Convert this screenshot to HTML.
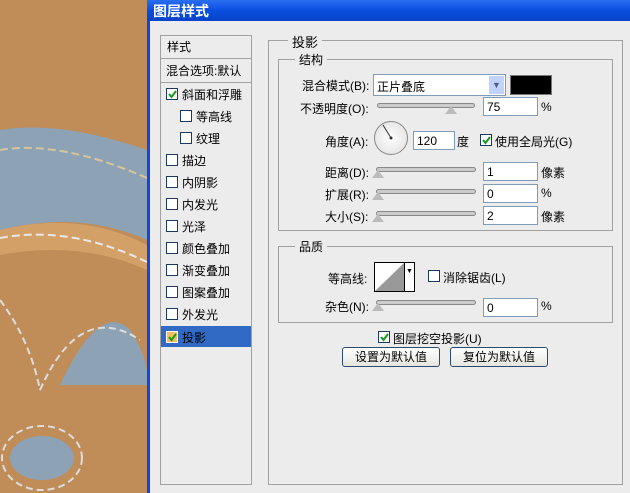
<!DOCTYPE html>
<html><head><meta charset="utf-8"><style>
*{margin:0;padding:0;box-sizing:border-box}
body{width:630px;height:493px;overflow:hidden;position:relative;background:#ececec;font-family:"Liberation Sans","Noto Sans CJK SC","WenQuanYi Zen Hei",sans-serif;font-size:12px;color:#000}
.a{position:absolute}
#img{left:0;top:0;width:147px;height:493px;background:#c08c58;overflow:hidden}
#title{left:147px;top:0;width:483px;height:21px;background:linear-gradient(#2a6ef0,#0a4ee0 50%,#0744c8);color:#fff;font-weight:bold;font-size:14px;padding:1px 0 0 6px}
#lb{left:147px;top:21px;width:3px;height:472px;background:#1046e8}
.t{position:absolute;white-space:nowrap}
.box{position:absolute;border:1px solid #a0a0a0}
.cb{position:absolute;width:12px;height:12px;border:1px solid #1c3b60;background:#fff}
.ck{background:#fff url() no-repeat}
.ck svg{position:absolute;left:1px;top:1px}
.sl{position:absolute;height:5px;border:1px solid #888;border-radius:3px;background:#ccc}
.th{position:absolute;width:0;height:0;border-left:6px solid transparent;border-right:6px solid transparent;border-bottom:8px solid #bbb}
.in{position:absolute;height:19px;border:1px solid #7f9db9;background:#fff;padding:2px 3px;font-size:12px}
.btn{position:absolute;height:20px;border:1px solid #2a4a70;border-radius:3px;background:linear-gradient(#fff,#e6e6e0);text-align:center;line-height:18px}
</style></head><body>
<div id="img" class="a">
<svg width="147" height="493">
<path d="M0 130 Q60 120 147 150 L147 240 Q80 210 0 230 Z" fill="#8ea2b6"/>
<path d="M0 230 Q80 210 147 245 L147 270 Q80 240 0 255Z" fill="#d3a067"/>
<path d="M60 385 Q100 300 130 330 Q150 360 147 385 Z" fill="#8ea2b6"/>
<ellipse cx="42" cy="458" rx="32" ry="22" fill="#8ea2b6"/>
<path d="M0 238 Q70 225 147 262" stroke="#e8e8e8" stroke-width="2" stroke-dasharray="8 4" fill="none"/>
<path d="M0 150 Q60 140 147 178" stroke="#d8c49a" stroke-width="2" stroke-dasharray="8 4" fill="none"/>
<path d="M0 300 Q30 340 40 390 M40 390 Q80 300 140 340" stroke="#ddd" stroke-width="2" stroke-dasharray="7 4" fill="none"/>
<ellipse cx="42" cy="458" rx="40" ry="32" stroke="#ddd" stroke-width="2" stroke-dasharray="7 4" fill="none"/>
</svg></div>
<div id="title" class="a">图层样式</div>
<div id="lb" class="a"></div>

<div class="box" style="left:160px;top:35px;width:92px;height:450px"></div>
<div class="t" style="left:167px;top:38px">样式</div>
<div class="a" style="left:161px;top:58px;width:90px;height:1px;background:#a0a0a0"></div>
<div class="t" style="left:166px;top:62px">混合选项:默认</div>
<div class="a" style="left:161px;top:82px;width:90px;height:1px;background:#a0a0a0"></div>

<div class="cb ck" style="left:166px;top:88px"><svg width="9" height="9"><path d="M1 4 L3.5 7 L8 1" stroke="#1a9a1a" stroke-width="2" fill="none"/></svg></div><div class="t" style="left:182px;top:86px">斜面和浮雕</div>
<div class="cb" style="left:180px;top:110px"></div><div class="t" style="left:196px;top:108px">等高线</div>
<div class="cb" style="left:180px;top:132px"></div><div class="t" style="left:196px;top:130px">纹理</div>
<div class="cb" style="left:166px;top:154px"></div><div class="t" style="left:182px;top:152px">描边</div>
<div class="cb" style="left:166px;top:176px"></div><div class="t" style="left:182px;top:174px">内阴影</div>
<div class="cb" style="left:166px;top:198px"></div><div class="t" style="left:182px;top:196px">内发光</div>
<div class="cb" style="left:166px;top:220px"></div><div class="t" style="left:182px;top:218px">光泽</div>
<div class="cb" style="left:166px;top:242px"></div><div class="t" style="left:182px;top:240px">颜色叠加</div>
<div class="cb" style="left:166px;top:264px"></div><div class="t" style="left:182px;top:262px">渐变叠加</div>
<div class="cb" style="left:166px;top:286px"></div><div class="t" style="left:182px;top:284px">图案叠加</div>
<div class="cb" style="left:166px;top:308px"></div><div class="t" style="left:182px;top:306px">外发光</div>
<div class="a" style="left:161px;top:326px;width:90px;height:21px;background:#316ac5"></div>
<div class="cb ck" style="left:166px;top:331px;background:#f0c060;border-color:#fff"><svg width="9" height="9"><path d="M1 4 L3.5 7 L8 1" stroke="#1a9a1a" stroke-width="2" fill="none"/></svg></div><div class="t" style="left:182px;top:329px;color:#000">投影</div>

<div class="box" style="left:268px;top:40px;width:355px;height:445px"></div>
<div class="t" style="left:288px;top:32px;background:#ececec;padding:0 4px;font-size:13px">投影</div>
<div class="box" style="left:278px;top:59px;width:335px;height:172px"></div>
<div class="t" style="left:295px;top:51px;background:#ececec;padding:0 4px">结构</div>

<div class="t" style="left:302px;top:77px">混合模式(B):</div>
<div class="in" style="left:373px;top:74px;width:133px;height:22px;padding-top:3px">正片叠底</div>
<div class="a" style="left:489px;top:76px;width:15px;height:18px;background:#c1d3fb;color:#4d6185;font-size:9px;text-align:center;line-height:18px">▼</div>
<div class="a" style="left:510px;top:75px;width:42px;height:20px;background:#000;border:1px solid #777"></div>

<div class="t" style="left:300px;top:100px">不透明度(O):</div>
<div class="sl" style="left:377px;top:103px;width:98px"></div><div class="th" style="left:445px;top:106px"></div>
<div class="in" style="left:483px;top:97px;width:55px">75</div><div class="t" style="left:541px;top:100px">%</div>

<div class="t" style="left:325px;top:133px">角度(A):</div>
<div class="a" style="left:374px;top:121px;width:34px;height:34px;border:1px solid #888;border-radius:50%;background:radial-gradient(#fff,#ddd)"></div>
<svg class="a" style="left:374px;top:121px" width="34" height="34"><line x1="17" y1="17" x2="9" y2="4" stroke="#333"/><circle cx="17" cy="17" r="1.5" fill="#333"/></svg>
<div class="in" style="left:413px;top:131px;width:42px">120</div><div class="t" style="left:457px;top:133px">度</div>
<div class="cb ck" style="left:480px;top:134px"><svg width="9" height="9"><path d="M1 4 L3.5 7 L8 1" stroke="#1a9a1a" stroke-width="2" fill="none"/></svg></div><div class="t" style="left:495px;top:133px">使用全局光(G)</div>

<div class="t" style="left:325px;top:164px">距离(D):</div>
<div class="sl" style="left:376px;top:167px;width:100px"></div><div class="th" style="left:372px;top:170px"></div>
<div class="in" style="left:483px;top:162px;width:55px">1</div><div class="t" style="left:541px;top:164px">像素</div>
<div class="t" style="left:325px;top:186px">扩展(R):</div>
<div class="sl" style="left:376px;top:189px;width:100px"></div><div class="th" style="left:372px;top:192px"></div>
<div class="in" style="left:483px;top:184px;width:55px">0</div><div class="t" style="left:541px;top:186px">%</div>
<div class="t" style="left:325px;top:208px">大小(S):</div>
<div class="sl" style="left:376px;top:211px;width:100px"></div><div class="th" style="left:372px;top:214px"></div>
<div class="in" style="left:483px;top:206px;width:55px">2</div><div class="t" style="left:541px;top:208px">像素</div>

<div class="box" style="left:278px;top:246px;width:335px;height:77px"></div>
<div class="t" style="left:295px;top:238px;background:#ececec;padding:0 4px">品质</div>
<div class="t" style="left:328px;top:270px">等高线:</div>
<div class="a" style="left:374px;top:262px;width:41px;height:30px;border:1px solid #000;background:#fff"></div>
<svg class="a" style="left:375px;top:263px" width="29" height="28"><path d="M0 28 L29 0 L29 28Z" fill="#999"/></svg>
<div class="a" style="left:404px;top:263px;width:1px;height:28px;background:#000"></div>
<div class="t" style="left:406px;top:268px;font-size:7px">▼</div>
<div class="cb" style="left:428px;top:270px"></div><div class="t" style="left:443px;top:269px">消除锯齿(L)</div>
<div class="t" style="left:325px;top:298px">杂色(N):</div>
<div class="sl" style="left:376px;top:300px;width:100px"></div><div class="th" style="left:372px;top:303px"></div>
<div class="in" style="left:483px;top:298px;width:55px">0</div><div class="t" style="left:541px;top:299px">%</div>

<div class="cb ck" style="left:378px;top:331px"><svg width="9" height="9"><path d="M1 4 L3.5 7 L8 1" stroke="#1a9a1a" stroke-width="2" fill="none"/></svg></div><div class="t" style="left:393px;top:330px">图层挖空投影(U)</div>
<div class="btn" style="left:342px;top:347px;width:98px">设置为默认值</div>
<div class="btn" style="left:450px;top:347px;width:98px">复位为默认值</div>
</body></html>
